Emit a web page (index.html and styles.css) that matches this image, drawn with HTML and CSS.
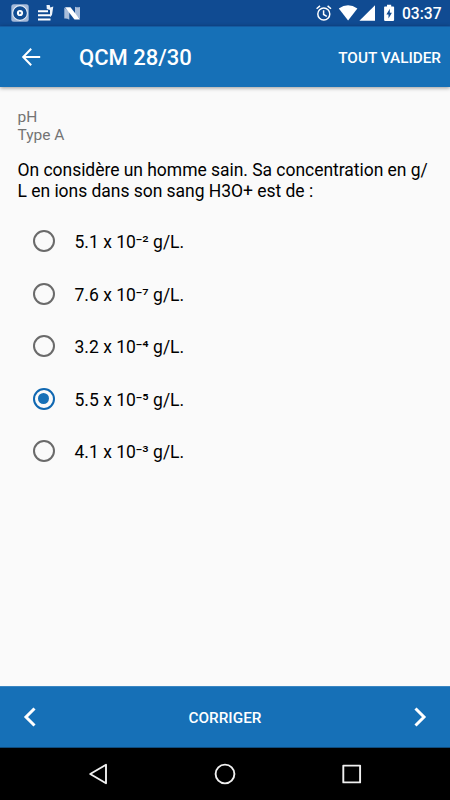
FILE: index.html
```
<!DOCTYPE html>
<html lang="fr">
<head>
<meta charset="utf-8">
<meta name="viewport" content="width=device-width, initial-scale=1">
<title>QCM 28/30</title>
<link rel="stylesheet" href="styles.css">
</head>
<body>
<div class="screen">
  <div class="status">
    <svg class="status-left" viewBox="0 0 100 26" width="100" height="26">
      <rect x="11.3" y="4.3" width="17.4" height="17.4" rx="2.5" fill="#a3b8d8"/>
      <circle cx="20" cy="13" r="7.4" fill="#104b92" stroke="#e8eef7" stroke-width="1.1"/>
      <circle cx="20" cy="13" r="3.1" fill="#fff"/>
      <path d="M19.2 11.4v3.2l2.4-1.6z" fill="#104b92"/>
      <path d="M38 11.3h10M38 15.3h12M38 19.5h12.5" stroke="#fff" stroke-width="1.9"/>
      <path d="M46.5 5h3.2l.6 2.5 3-1-1.3 8.5-2 2.2V10l-3.2-1z" fill="#edf2f9"/>
      <path d="M64.3 7.5l5 4v8.3q-2.5-1.8-5-1.2zM75 6.8q2.5 1 5 .2v12l-5-4.5z" fill="#a9bedb"/>
      <path d="M65 7.2h5.5l9.5 12.4h-5.5z" fill="#fff"/>
    </svg>
    <div class="status-right">
      <svg viewBox="314 0 82 26" width="82" height="26">
        <g fill="none" stroke="#fff" stroke-width="1.5">
          <circle cx="323.8" cy="14" r="6"/>
          <path d="M323.6 10.2v4.3l3.2 1.9M316.6 8.8l3.4-2.9M331 8.8l-3.4-2.9"/>
        </g>
        <path d="M338.8 8.6Q348 1.8 357.4 8.6L348.1 20.6z" fill="#fff"/>
        <path d="M375 5.2v15.6h-15.6z" fill="#fff"/>
        <path d="M387 5.3V4.8h4.2v1.7h2.1q.8 0 .8.8v12.8q0 .8-.8.8h-8.4q-.8 0-.8-.8V7.3q0-.8.8-.8h2.1z" fill="#fff"/>
        <path d="M389.8 8.8l-3.4 5.6h2.1v4.2l3.4-5.8h-2.1z" fill="#104b92"/>
      </svg>
      <span class="clock">03:37</span>
    </div>
  </div>
  <header class="appbar">
    <svg class="back" viewBox="0 0 20 20" width="20" height="20"><path d="M10.2 1.8L2.2 10l8 8.2M2.2 10h17" fill="none" stroke="#fff" stroke-width="2"/></svg>
    <h1>QCM 28/30</h1>
    <span class="action">TOUT VALIDER</span>
  </header>
  <main class="content">
    <div class="meta">pH<br>Type A</div>
    <p class="question">On considère un homme sain. Sa concentration en g/<br>L en ions dans son sang H3O+ est de :</p>
    <div class="options">
      <div class="option"><span class="radio"></span><span class="label">5.1 x 10⁻² g/L.</span></div>
      <div class="option"><span class="radio"></span><span class="label">7.6 x 10⁻⁷ g/L.</span></div>
      <div class="option"><span class="radio"></span><span class="label">3.2 x 10⁻⁴ g/L.</span></div>
      <div class="option"><span class="radio checked"></span><span class="label">5.5 x 10⁻⁵ g/L.</span></div>
      <div class="option"><span class="radio"></span><span class="label">4.1 x 10⁻³ g/L.</span></div>
    </div>
  </main>
  <footer class="bottom">
    <svg viewBox="0 0 14 20" width="14" height="20"><path d="M11.5 1.5L3 10l8.5 8.5" fill="none" stroke="#fff" stroke-width="3"/></svg>
    <span class="correct">CORRIGER</span>
    <svg viewBox="0 0 14 20" width="14" height="20"><path d="M2.5 1.5L11 10l-8.5 8.5" fill="none" stroke="#fff" stroke-width="3"/></svg>
  </footer>
  <nav class="nav">
    <svg viewBox="0 0 450 52" width="450" height="52">
      <g fill="none" stroke="#f0f0f0" stroke-width="1.9" stroke-linejoin="round">
        <path d="M106 16.8v18.4L90.2 26z"/>
        <circle cx="225" cy="26" r="9.4"/>
        <rect x="343.3" y="17.6" width="16.8" height="16.8"/>
      </g>
    </svg>
  </nav>
</div>
</body>
</html>
```
FILE: styles.css
```
* { box-sizing: border-box; }
body {
  margin: 0;
  font-family: Roboto, "Liberation Sans", sans-serif;
  background: #fafafa;
}
.screen {
  display: flex;
  flex-direction: column;
  width: 450px;
  height: 800px;
  overflow: hidden;
}
.status {
  display: flex;
  justify-content: space-between;
  flex: none;
  height: 26px;
  background: #104b92;
}
.status svg { display: block; }
.status-right {
  display: flex;
  align-items: center;
  padding-right: 9px;
}
.clock {
  width: 39px;
  margin-left: 6px;
  padding-top: 2px;
  font-size: 15.6px;
  font-weight: 500;
  line-height: 20px;
  color: #fff;
  white-space: nowrap;
}
.appbar {
  display: flex;
  align-items: center;
  flex: none;
  height: 61px;
  padding: 0 9px 0 21px;
  background: #1670b7;
  border-top: 1px solid #145ba2;
  box-shadow: 0 1px 4px rgba(0, 0, 0, .4);
  color: #fff;
}
.appbar h1 {
  margin: 0 auto 0 38px;
  padding-top: 2px;
  font-size: 22px;
  font-weight: 500;
  line-height: 26px;
}
.action, .correct {
  padding-top: 1px;
  font-size: 15.3px;
  font-weight: 500;
  white-space: nowrap;
}
.content {
  flex: 1;
  padding: 21px 0 0 17.5px;
}
.meta {
  font-size: 15.5px;
  line-height: 18px;
  color: #747474;
}
.question {
  margin: 16px 0 0;
  font-size: 17.5px;
  line-height: 20.5px;
  letter-spacing: -0.035px;
  color: #000;
  white-space: nowrap;
}
.options {
  margin-top: 14px;
  padding-left: 15px;
}
.option {
  display: flex;
  align-items: center;
  gap: 20px;
  height: 52.5px;
  font-size: 17.5px;
  color: #000;
}
.label { padding-top: 2px; }
.radio {
  display: flex;
  align-items: center;
  justify-content: center;
  width: 22px;
  height: 22px;
  border: 2px solid #6a6a6a;
  border-radius: 50%;
}
.radio.checked { border-color: #0f67b1; }
.radio.checked::after {
  content: "";
  width: 11px;
  height: 11px;
  border-radius: 50%;
  background: #1670b7;
}
.bottom {
  display: flex;
  align-items: center;
  justify-content: space-between;
  flex: none;
  height: 62px;
  padding: 0 23px;
  background: #1670b7;
  border-top: 1px solid #3a86c2;
  border-bottom: 1px solid #0f4b7c;
  color: #fff;
}
.nav {
  flex: none;
  height: 52px;
  background: #000;
}
.nav svg { display: block; }
```
